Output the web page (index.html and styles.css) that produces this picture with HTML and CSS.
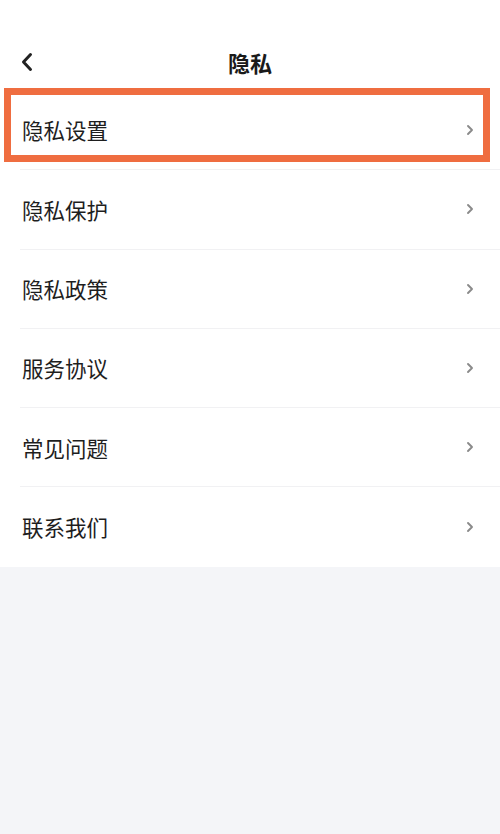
FILE: index.html
```html
<!DOCTYPE html>
<html lang="zh-CN">
<head>
<meta charset="utf-8">
<title>隐私</title>
<link rel="stylesheet" href="styles.css">
</head>
<body>
<div class="page">
  <header class="nav">
    <span class="back">
      <svg width="14" height="20" viewBox="0 0 14 20"><path d="M10.5 2.5 L3.5 10 L10.5 17.5" fill="none" stroke="#222" stroke-width="3" stroke-linecap="round" stroke-linejoin="round"/></svg>
    </span>
    <h1 class="title">隐私</h1>
  </header>
  <ul class="list">
    <li class="row highlighted">
      <span class="label">隐私设置</span>
      <svg class="chev" width="8" height="12" viewBox="0 0 8 12"><path d="M2 2 L6 6 L2 10" fill="none" stroke="#8a8a8a" stroke-width="1.9" stroke-linecap="round" stroke-linejoin="round"/></svg>
      <span class="mark"></span>
    </li>
    <li class="row">
      <span class="label">隐私保护</span>
      <svg class="chev" width="8" height="12" viewBox="0 0 8 12"><path d="M2 2 L6 6 L2 10" fill="none" stroke="#8a8a8a" stroke-width="1.9" stroke-linecap="round" stroke-linejoin="round"/></svg>
    </li>
    <li class="row">
      <span class="label">隐私政策</span>
      <svg class="chev" width="8" height="12" viewBox="0 0 8 12"><path d="M2 2 L6 6 L2 10" fill="none" stroke="#8a8a8a" stroke-width="1.9" stroke-linecap="round" stroke-linejoin="round"/></svg>
    </li>
    <li class="row">
      <span class="label">服务协议</span>
      <svg class="chev" width="8" height="12" viewBox="0 0 8 12"><path d="M2 2 L6 6 L2 10" fill="none" stroke="#8a8a8a" stroke-width="1.9" stroke-linecap="round" stroke-linejoin="round"/></svg>
    </li>
    <li class="row">
      <span class="label">常见问题</span>
      <svg class="chev" width="8" height="12" viewBox="0 0 8 12"><path d="M2 2 L6 6 L2 10" fill="none" stroke="#8a8a8a" stroke-width="1.9" stroke-linecap="round" stroke-linejoin="round"/></svg>
    </li>
    <li class="row last">
      <span class="label">联系我们</span>
      <svg class="chev" width="8" height="12" viewBox="0 0 8 12"><path d="M2 2 L6 6 L2 10" fill="none" stroke="#8a8a8a" stroke-width="1.9" stroke-linecap="round" stroke-linejoin="round"/></svg>
    </li>
  </ul>
</div>
</body>
</html>
```
FILE: styles.css
```css
html, body {
  margin: 0;
  padding: 0;
}
body {
  background: #f4f5f8;
  font-family: "Noto Sans CJK SC", "Noto Sans", sans-serif;
  color: #1e1e1e;
  width: 500px;
  min-height: 834px;
}
.page {
  background: #ffffff;
}
.nav {
  height: 91px;
  box-sizing: border-box;
  padding-top: 32px;
  display: flex;
  align-items: center;
  justify-content: center;
  position: relative;
}
.back {
  position: absolute;
  left: 20px;
  top: 52px;
  display: flex;
}
.title {
  margin: 0;
  font-size: 22px;
  font-weight: 700;
  line-height: 1;
  color: #1a1a1a;
}
.list {
  list-style: none;
  margin: 0;
  padding: 0;
}
.row {
  height: 79.3px;
  box-sizing: border-box;
  margin-left: 20px;
  padding-left: 2px;
  padding-right: 26px;
  display: flex;
  align-items: center;
  justify-content: space-between;
  border-bottom: 1px solid #f1f1f3;
}
.row.last {
  border-bottom: none;
}
.label {
  font-size: 21.5px;
  line-height: 1;
  color: #1e1e1e;
}
.chev {
  display: block;
}
.highlighted {
  position: relative;
}
.mark {
  position: absolute;
  left: -16px;
  right: 10px;
  top: -3px;
  bottom: 7px;
  border: 7px solid #ef6d40;
  pointer-events: none;
}
```
